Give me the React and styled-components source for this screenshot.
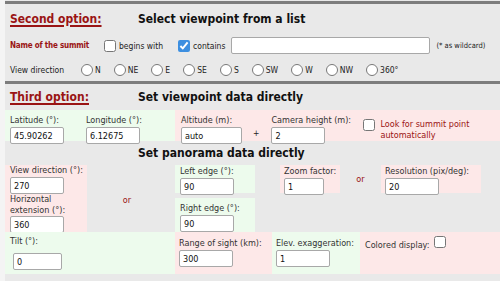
import styled, { createGlobalStyle } from "styled-components";

const GREEN = "#edfbed";
const PINK = "#fde8e8";
const RED = "#9a1414";

const GlobalStyle = createGlobalStyle`
  body {
    margin: 0;
    background: #f4f4f4;
    font-family: "DejaVu Sans Condensed", "DejaVu Sans", sans-serif;
    color: #222;
  }
`;

const Page = styled.div`
  margin-left: 5px;
  padding-top: 1px;
  background: #e9e9e9;
  min-height: 280px;
  white-space: nowrap;
`;

const Section = styled.section`
  border-top: 3px solid #7d7d7d;
`;

const TitleRow = styled.div`
  display: flex;
  align-items: center;
  height: ${(p) => p.$h}px;
  padding-left: 5px;
`;

const OptionTitle = styled.h2`
  margin: 0;
  width: 128px;
  flex: none;
  font-size: 12px;
  font-weight: bold;
  color: ${RED};
  text-decoration: underline;
  text-decoration-thickness: 2px;
  text-underline-offset: 2px;
`;

const Heading = styled.h3`
  margin: 0;
  font-size: 12px;
  font-weight: bold;
  color: #111;
  padding-left: ${(p) => p.$indent || 0}px;
`;

const Row = styled.div`
  display: flex;
  align-items: center;
  height: ${(p) => p.$h}px;
  padding-left: 5px;
  font-size: 8.5px;
`;

const RedLabel = styled.span`
  color: ${RED};
  font-weight: bold;
  font-size: 8px;
  letter-spacing: -0.2px;
  flex: none;
  margin-right: ${(p) => p.$mr || 0}px;
`;

const Text = styled.span`
  flex: none;
  margin-right: ${(p) => p.$mr || 0}px;
  color: ${(p) => p.$color || "#222"};
  font-size: ${(p) => p.$size || 8.5}px;
`;

const Check = styled.input.attrs({ type: "checkbox" })`
  flex: none;
  width: 12px;
  height: 12px;
  margin: 0 ${(p) => p.$mr ?? 4}px 0 0;
  accent-color: #3d8fe0;
`;

const Radio = styled.input.attrs({ type: "radio" })`
  width: 12px;
  height: 12px;
  margin: 0 2px 0 0;
`;

const RadioItem = styled.label`
  display: flex;
  flex: none;
  align-items: center;
  margin-right: 13px;
`;

const TextBox = styled.input.attrs({ type: "text" })`
  box-sizing: border-box;
  flex: none;
  width: ${(p) => p.$w}px;
  height: 17px;
  margin: ${(p) => p.$m || "0"};
  padding: 0 3px;
  border: 1px solid #a8a8a8;
  border-radius: 2px;
  background: #fff;
  font-family: inherit;
  font-size: 9px;
  color: #111;
  outline: none;
`;

const Band = styled.div`
  display: flex;
  height: ${(p) => p.$h}px;
  font-size: 9px;
`;

const Cell = styled.div`
  display: flex;
  flex-direction: ${(p) => (p.$col ? "column" : "row")};
  align-items: ${(p) => p.$align || "flex-start"};
  justify-content: ${(p) => p.$justify || "flex-start"};
  gap: ${(p) => p.$gap || 0}px;
  width: ${(p) => (p.$w ? `${p.$w}px` : "auto")};
  height: ${(p) => (p.$h ? `${p.$h}px` : "auto")};
  flex: ${(p) => (p.$w ? "none" : "1")};
  box-sizing: border-box;
  padding: ${(p) => p.$pad || "0"};
  background: ${(p) => p.$bg || "transparent"};
`;

const Field = styled.div`
  display: flex;
  flex-direction: column;
  flex: none;
  width: ${(p) => p.$w}px;
  margin-right: ${(p) => p.$mr || 0}px;
`;

const Label = styled.span`
  color: #333;
  line-height: ${(p) => p.$lh || 12}px;
  margin-bottom: ${(p) => p.$mb ?? 1}px;
`;

const Or = styled.span`
  color: ${RED};
  font-size: 9px;
`;

const SummitCheck = styled.label`
  display: flex;
  align-items: flex-start;
  margin-top: 5px;
  color: ${RED};
  line-height: 11px;
`;

const Block = styled.div`
  display: flex;
  height: 67px;
  font-size: 9px;
`;

const Stack = styled.div`
  display: flex;
  flex-direction: column;
  justify-content: space-between;
  flex: none;
  width: ${(p) => p.$w}px;
`;

const directions = ["N", "NE", "E", "SE", "S", "SW", "W", "NW", "360°"];

export default function App() {
  return (
    <>
      <GlobalStyle />
      <Page>
        <Section>
          <TitleRow $h={29}>
            <OptionTitle>Second option:</OptionTitle>
            <Heading>Select viewpoint from a list</Heading>
          </TitleRow>
          <Row $h={25}>
            <RedLabel $mr={15}>Name of the summit</RedLabel>
            <Check $mr={3} />
            <Text $mr={15}>begins with</Text>
            <Check $mr={3} defaultChecked />
            <Text $mr={6}>contains</Text>
            <TextBox $w={199} $m="0 6px 0 0" />
            <Text $size={7.5}>(* as wildcard)</Text>
          </Row>
          <Row $h={23}>
            <Text $mr={17}>View direction</Text>
            {directions.map((d) => (
              <RadioItem key={d}>
                <Radio name="dir" />
                {d}
              </RadioItem>
            ))}
          </Row>
        </Section>
        <Section>
          <TitleRow $h={26}>
            <OptionTitle>Third option:</OptionTitle>
            <Heading>Set viewpoint data directly</Heading>
          </TitleRow>
          <Band $h={31}>
            <Cell $w={170} $bg={GREEN} $pad="4px 0 0 5px" $gap={22}>
              <Field $w={54}>
                <Label>Latitude (°):</Label>
                <TextBox $w={54} defaultValue="45.90262" />
              </Field>
              <Field $w={54}>
                <Label>Longitude (°):</Label>
                <TextBox $w={54} defaultValue="6.12675" />
              </Field>
            </Cell>
            <Cell $bg={PINK} $pad="4px 0 0 6px">
              <Field $w={61} $mr={11}>
                <Label>Altitude (m):</Label>
                <TextBox $w={61} defaultValue="auto" />
              </Field>
              <Text $mr={12} style={{ marginTop: 14 }}>+</Text>
              <Field $w={80} $mr={12}>
                <Label>Camera height (m):</Label>
                <TextBox $w={54} defaultValue="2" />
              </Field>
              <SummitCheck>
                <Check $mr={5} />
                Look for summit point
                <br />
                automatically
              </SummitCheck>
            </Cell>
          </Band>
          <TitleRow $h={24}>
            <Heading $indent={128}>Set panorama data directly</Heading>
          </TitleRow>
          <Block>
            <Cell $w={82} $col $bg={PINK} $pad="0 0 0 5px">
              <Label $lh={11}>View direction (°):</Label>
              <TextBox $w={54} defaultValue="270" />
              <Label $lh={11} $mb={0}>
                Horizontal
                <br />
                extension (°):
              </Label>
              <TextBox $w={54} defaultValue="360" />
            </Cell>
            <Cell $w={80} $align="center" $justify="center" $pad="2px 0 0 0">
              <Or>or</Or>
            </Cell>
            <Cell $w={8} />
            <Stack $w={80}>
              <Cell $w={80} $h={28} $bg={GREEN} $pad="1px 0 0 5px">
                <Field $w={54}>
                  <Label $lh={11}>Left edge (°):</Label>
                  <TextBox $w={54} defaultValue="90" />
                </Field>
              </Cell>
              <Cell $w={80} $h={34} $bg={GREEN} $pad="4px 0 0 5px">
                <Field $w={54}>
                  <Label $lh={12}>Right edge (°):</Label>
                  <TextBox $w={54} defaultValue="90" />
                </Field>
              </Cell>
            </Stack>
            <Cell $w={25} />
            <Stack $w={201}>
              <Band $h={28}>
                <Cell $w={60} $bg={PINK} $pad="1px 0 0 4px">
                  <Field $w={54}>
                    <Label $lh={11}>Zoom factor:</Label>
                    <TextBox $w={40} defaultValue="1" />
                  </Field>
                </Cell>
                <Cell $w={41} $align="center" $justify="center">
                  <Or>or</Or>
                </Cell>
                <Cell $w={100} $bg={PINK} $pad="1px 0 0 4px">
                  <Field $w={90}>
                    <Label $lh={11}>Resolution (pix/deg):</Label>
                    <TextBox $w={54} defaultValue="20" />
                  </Field>
                </Cell>
              </Band>
            </Stack>
          </Block>
          <Band $h={42}>
            <Cell $w={170} $col $bg={GREEN} $pad="3px 0 0 5px">
              <Label $mb={6}>Tilt (°):</Label>
              <TextBox $w={49} $m="0 0 0 3px" defaultValue="0" />
            </Cell>
            <Cell $w={97} $bg={PINK} $pad="5px 0 0 4px">
              <Field $w={90}>
                <Label>Range of sight (km):</Label>
                <TextBox $w={54} defaultValue="300" />
              </Field>
            </Cell>
            <Cell $w={88} $bg={GREEN} $pad="5px 0 0 4px">
              <Field $w={84}>
                <Label>Elev. exaggeration:</Label>
                <TextBox $w={54} defaultValue="1" />
              </Field>
            </Cell>
            <Cell $bg={PINK} $pad="4px 0 0 5px">
              <Label style={{ marginTop: 3, marginRight: 5 }}>Colored display:</Label>
              <Check />
            </Cell>
          </Band>
        </Section>
      </Page>
    </>
  );
}
